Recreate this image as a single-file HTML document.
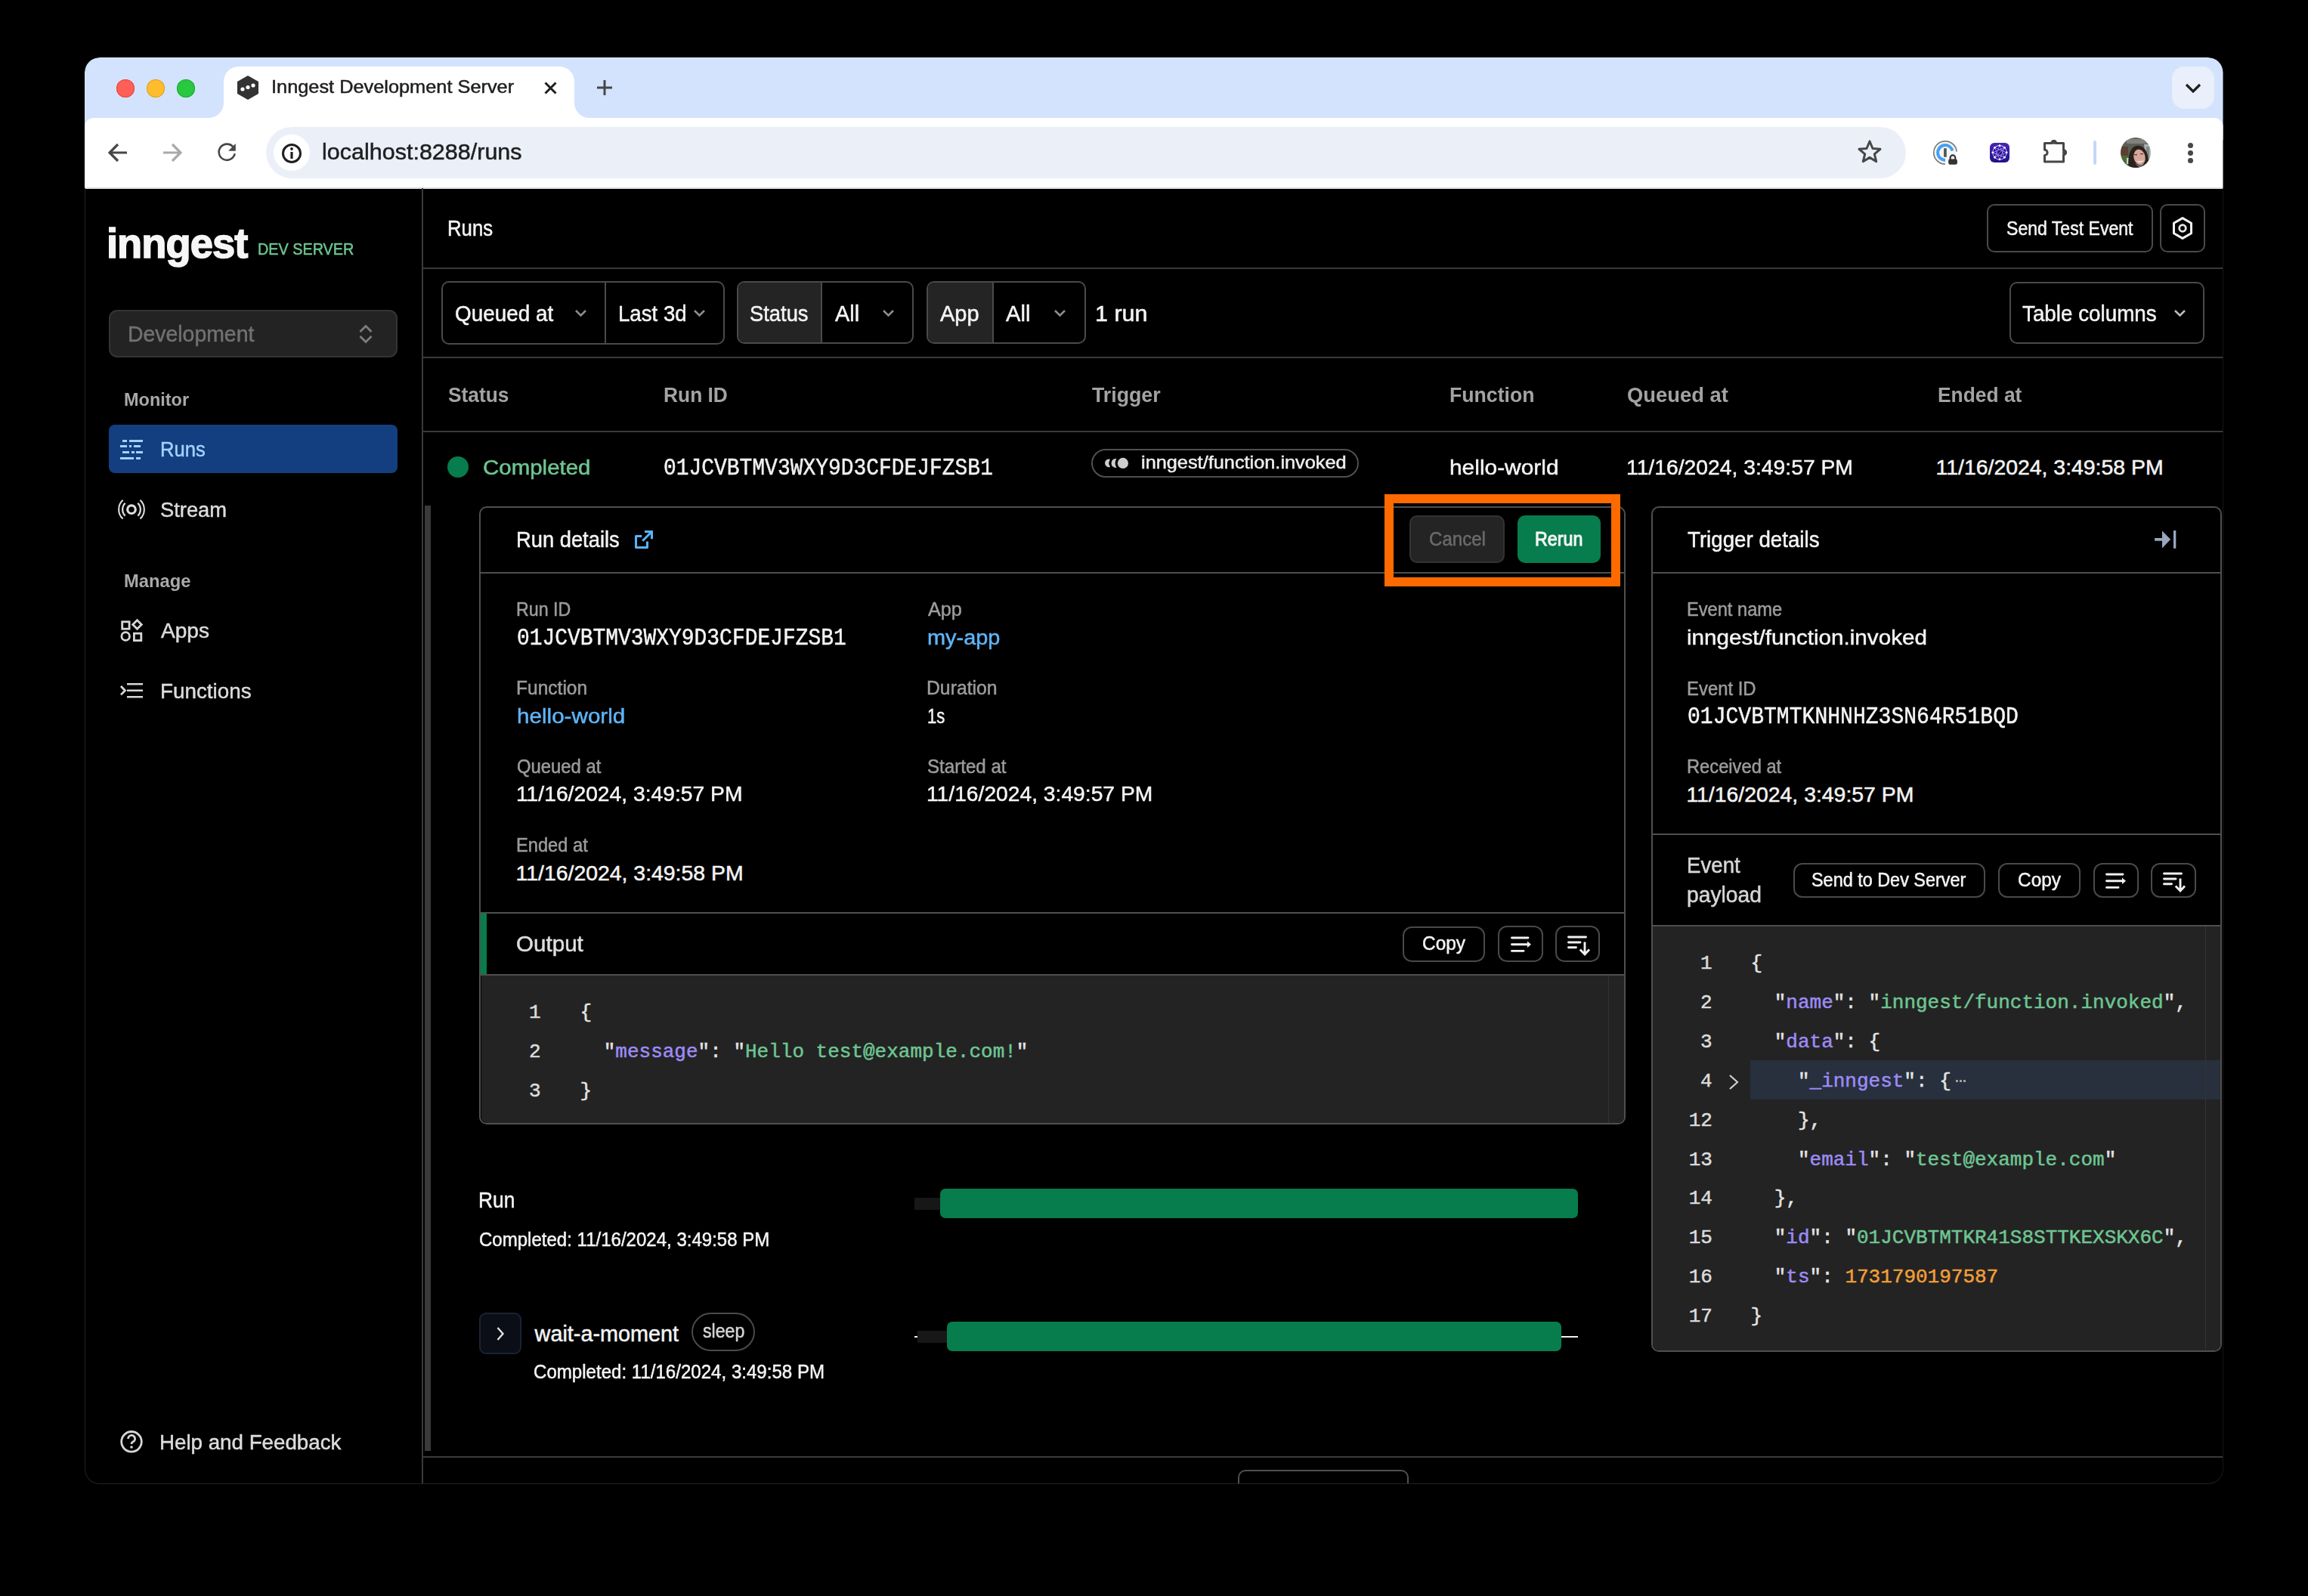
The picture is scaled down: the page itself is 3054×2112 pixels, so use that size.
<!DOCTYPE html>
<html><head><meta charset="utf-8"><style>
html,body{margin:0;padding:0;background:#000;width:3054px;height:2112px;overflow:hidden}
.t{position:absolute;white-space:nowrap;-webkit-text-stroke-width:0.5px}
#clip{position:absolute;left:0;top:0;width:3054px;height:2112px;clip-path:inset(76px 112.5px 148px 112px round 20px)}
</style></head><body><div id="clip">
<div style="position:absolute;left:112px;top:76px;width:2829.5px;height:1888px;background:#000;border-radius:20px;box-shadow:0 0 0 1px #2a2a2a;overflow:hidden"></div>
<div style="position:absolute;left:112px;top:76px;width:2829.5px;height:109px;background:#d3e3fd;border-radius:20px 20px 0 0"></div>
<div style="position:absolute;left:112px;top:156px;width:2829.5px;height:92px;background:#fff;border-radius:12px 12px 0 0"></div>
<div style="position:absolute;left:112px;top:247.5px;width:2829.5px;height:2.0px;background:#dcdcdc"></div>
<div style="position:absolute;left:296px;top:88px;width:464px;height:72px;background:#fff;border-radius:20px 20px 0 0"></div>
<svg style="position:absolute;left:276px;top:136px;" width="20" height="20" viewBox="0 0 20 20" fill="none"><path d="M20 0 V20 H0 A20 20 0 0 0 20 0Z" fill="#fff"/></svg>
<svg style="position:absolute;left:760px;top:136px;" width="20" height="20" viewBox="0 0 20 20" fill="none"><path d="M0 0 V20 H20 A20 20 0 0 1 0 0Z" fill="#fff"/></svg>
<div style="position:absolute;left:154px;top:105px;width:24px;height:24px;background:#ff5f57;border-radius:50%;box-shadow:inset 0 0 0 1px #e2463f"></div>
<div style="position:absolute;left:194px;top:105px;width:24px;height:24px;background:#febc2e;border-radius:50%;box-shadow:inset 0 0 0 1px #e1a116"></div>
<div style="position:absolute;left:234px;top:105px;width:24px;height:24px;background:#28c840;border-radius:50%;box-shadow:inset 0 0 0 1px #1aab29"></div>
<svg style="position:absolute;left:313px;top:100px;" width="30" height="32" viewBox="0 0 30 32" fill="none"><path d="M15 0 L29 8 V24 L15 32 L1 24 V8Z" fill="#333"/><circle cx="8" cy="18" r="2.6" fill="#fff"/><circle cx="15" cy="15.5" r="2.6" fill="#fff"/><circle cx="22" cy="13" r="2.6" fill="#fff"/></svg>
<div id="t1" class="t" style="left:358.9px;top:103.4px;font-size:24px;line-height:24px;color:#1f1f1f;font-weight:400;font-family:'Liberation Sans', sans-serif;transform:scaleX(1.0557);transform-origin:0 0;">Inngest Development Server</div>
<svg style="position:absolute;left:720px;top:108px;" width="17" height="17" viewBox="0 0 17 17" fill="none"><path d="M1.5 1.5 L15.5 15.5 M15.5 1.5 L1.5 15.5" stroke="#1f1f1f" stroke-width="3"/></svg>
<svg style="position:absolute;left:790px;top:106px;" width="20" height="20" viewBox="0 0 20 20" fill="none"><path d="M10 0 V20 M0 10 H20" stroke="#474747" stroke-width="3"/></svg>
<div style="position:absolute;left:2874px;top:88px;width:56px;height:56px;background:#e9effb;border-radius:16px"></div>
<svg style="position:absolute;left:2891px;top:110px;" width="22" height="13" viewBox="0 0 22 13" fill="none"><path d="M2 2 L11 11 L20 2" stroke="#1f1f1f" stroke-width="3.2" fill="none"/></svg>
<svg style="position:absolute;left:143px;top:189px;" width="27" height="26" viewBox="0 0 27 26" fill="none"><path d="M25 13 H3 M13 2 L2 13 L13 24" stroke="#474747" stroke-width="3.2" fill="none"/></svg>
<svg style="position:absolute;left:214px;top:189px;" width="27" height="26" viewBox="0 0 27 26" fill="none"><path d="M2 13 H24 M14 2 L25 13 L14 24" stroke="#a9a9a9" stroke-width="3.2" fill="none"/></svg>
<svg style="position:absolute;left:286px;top:189px;" width="28" height="28" viewBox="0 0 28 28" fill="none"><path d="M22.6 5.6 A10.6 10.6 0 1 0 24.7 14.3" stroke="#474747" stroke-width="2.6" fill="none"/><path d="M16.2 10.8 H25.8 V1Z" fill="#474747"/></svg>
<div style="position:absolute;left:352px;top:168px;width:2170px;height:68px;background:#ebf0f8;border-radius:34px"></div>
<div style="position:absolute;left:361.5px;top:178px;width:48.0px;height:48px;background:#fff;border-radius:50%"></div>
<svg style="position:absolute;left:372px;top:189px;" width="28" height="28" viewBox="0 0 28 28" fill="none"><circle cx="14" cy="14" r="11.5" stroke="#1f1f1f" stroke-width="3"/><path d="M14 12 V21" stroke="#1f1f1f" stroke-width="3.2"/><circle cx="14" cy="8" r="1.9" fill="#1f1f1f"/></svg>
<div id="t2" class="t" style="left:425.9px;top:187.0px;font-size:29px;line-height:29px;color:#1f1f1f;font-weight:400;font-family:'Liberation Sans', sans-serif;transform:scaleX(1.0520);transform-origin:0 0;">localhost:8288/runs</div>
<svg style="position:absolute;left:2457px;top:184px;" width="34" height="33" viewBox="0 0 34 33" fill="none"><path d="M17 3 L21 12.5 L31 13.3 L23.3 19.8 L25.7 29.7 L17 24.4 L8.3 29.7 L10.7 19.8 L3 13.3 L13 12.5Z" stroke="#474747" stroke-width="3" stroke-linejoin="round" fill="none"/></svg>
<svg style="position:absolute;left:2556px;top:184px;" width="38" height="38" viewBox="0 0 38 38" fill="none"><circle cx="18" cy="18" r="14.2" fill="#f5f5f5"/><path d="M18 33.2 A15.2 15.2 0 1 1 33.14 16.68" stroke="#7c7c7c" stroke-width="1.7" fill="none"/><path d="M27.56 15.44 A9.9 9.9 0 1 0 18 27.9" stroke="#42a0f6" stroke-width="4" fill="none"/><rect x="16.1" y="12.2" width="3.7" height="11.6" fill="#555"/><rect x="22.2" y="26.5" width="11.7" height="7.3" rx="2.3" fill="#333"/><path d="M24.6 27 V24.8 A3.35 3.35 0 0 1 31.3 24.8 V27" stroke="#333" stroke-width="2.2" fill="none"/></svg>
<div style="position:absolute;left:2633px;top:189px;width:26px;height:26px;background:linear-gradient(#4c22b6,#1d1486);border-radius:6px"></div>
<svg style="position:absolute;left:2633px;top:189px;" width="26" height="26" viewBox="0 0 26 26" fill="none"><circle cx="13" cy="12.8" r="9.2" fill="#23108a" stroke="#c7b0ff" stroke-width="1.1"/><path d="M13.00 3.60 L19.51 19.31 M13.00 3.60 L6.49 19.31 M19.51 6.29 L13.00 22.00 M19.51 6.29 L3.80 12.80 M22.20 12.80 L6.49 19.31 M22.20 12.80 L6.49 6.29 M19.51 19.31 L3.80 12.80 M13.00 22.00 L6.49 6.29 M19.51 6.29 L6.49 19.31 M3.80 12.80 L19.51 19.31 " stroke="#9d86f5" stroke-width="0.9" fill="none"/><circle cx="13.00" cy="3.60" r="1.35" fill="#fff"/><circle cx="19.51" cy="6.29" r="1.35" fill="#fff"/><circle cx="22.20" cy="12.80" r="1.35" fill="#fff"/><circle cx="19.51" cy="19.31" r="1.35" fill="#fff"/><circle cx="13.00" cy="22.00" r="1.35" fill="#fff"/><circle cx="6.49" cy="19.31" r="1.35" fill="#fff"/><circle cx="3.80" cy="12.80" r="1.35" fill="#fff"/><circle cx="6.49" cy="6.29" r="1.35" fill="#fff"/></svg>
<svg style="position:absolute;left:2700px;top:180px;" width="40" height="40" viewBox="0 0 40 40" fill="none"><path d="M5.5 9.5 H14.7 A3 3 0 0 1 20.7 9.5 H30.5 V18.7 A3 3 0 0 1 30.5 24.7 V34 H5.5 V25.5 A3.6 3.6 0 0 0 5.5 18.3Z" stroke="#474747" stroke-width="3" stroke-linejoin="round" fill="none"/><circle cx="17.9" cy="7.9" r="2.9" fill="#474747"/><circle cx="32" cy="21.7" r="2.9" fill="#474747"/></svg>
<div style="position:absolute;left:2770px;top:186px;width:4px;height:32px;background:#c4d7f7;border-radius:2px"></div>
<svg style="position:absolute;left:2806px;top:182px;" width="40" height="40" viewBox="0 0 40 40" fill="none"><defs><clipPath id="av"><circle cx="20" cy="20" r="20"/></clipPath><filter id="avb"><feGaussianBlur stdDeviation="0.7"/></filter></defs><g clip-path="url(#av)"><g filter="url(#avb)"><rect x="-2" y="-2" width="44" height="44" fill="#5b5e55"/><rect x="8" y="2" width="28" height="6" fill="#7f837b"/><path d="M31 9 H42 V38 H34Z" fill="#aeb3b0"/><path d="M34 12 H38 V30 H34Z" fill="#7d8a86"/><rect x="-2" y="12" width="12" height="13" fill="#5a4030"/><rect x="-2" y="24" width="13" height="16" fill="#4e6a36"/><rect x="8" y="27" width="4" height="8" fill="#c9d3d6"/><path d="M11 42 C9 30 11 16 18 12 C26 8 34 14 36 24 C37 32 38 38 40 42Z" fill="#2b211b"/><ellipse cx="25" cy="26" rx="7.6" ry="10.4" fill="#d7a69a" transform="rotate(-12 25 26)"/><path d="M19 33 Q25 41 32 32 Q30 38 25 39 Q21 38 19 33Z" fill="#7f736e"/><path d="M21 31 Q26 35.5 31.5 30 Q27 32 21 31Z" fill="#f2ece8"/><rect x="18" y="22" width="4" height="1.3" fill="#5a4238"/><rect x="26" y="21" width="4" height="1.3" fill="#5a4238"/><path d="M14 42 Q25 38 38 42Z" fill="#b9a9ab"/></g></g></svg>
<div style="position:absolute;left:2894.5px;top:188.8px;width:7.0px;height:7.0px;background:#474747;border-radius:50%"></div>
<div style="position:absolute;left:2894.5px;top:198.8px;width:7.0px;height:7.0px;background:#474747;border-radius:50%"></div>
<div style="position:absolute;left:2894.5px;top:208.8px;width:7.0px;height:7.0px;background:#474747;border-radius:50%"></div>
<div style="position:absolute;left:558px;top:249px;width:2px;height:1715px;background:#3a3a3a"></div>
<div style="position:absolute;left:560px;top:1927px;width:2381.5px;height:2px;background:#3a3a3a"></div>
<div style="position:absolute;left:1637.6px;top:1945.3px;width:226.9px;height:39.7px;border:2px solid #505050;box-sizing:border-box;border-radius:10px"></div>
<div id="t3" class="t" style="left:141.1px;top:294.2px;font-size:56px;line-height:56px;color:#f6f6f6;font-weight:700;font-family:'Liberation Sans', sans-serif;transform:scaleX(0.9701);transform-origin:0 0;letter-spacing:-1px;-webkit-text-stroke:1.6px #f6f6f6;">inngest</div>
<div id="t4" class="t" style="left:340.8px;top:318.9px;font-size:22.2px;line-height:22.2px;color:#6cc590;font-weight:400;font-family:'Liberation Sans', sans-serif;transform:scaleX(0.8926);transform-origin:0 0;">DEV SERVER</div>
<div style="position:absolute;left:144.1px;top:410.3px;width:381.6px;height:63.0px;background:#232323;border:2px solid #343434;box-sizing:border-box;border-radius:11px"></div>
<div id="t5" class="t" style="left:169.0px;top:427.5px;font-size:28.6px;line-height:28.6px;color:#717171;font-weight:400;font-family:'Liberation Sans', sans-serif;transform:scaleX(0.9932);transform-origin:0 0;">Development</div>
<svg style="position:absolute;left:472px;top:428px;" width="24" height="28" viewBox="0 0 24 28" fill="none"><path d="M4.5 11 L12 3.5 L19.5 11 M4.5 17 L12 24.5 L19.5 17" stroke="#7d7d7d" stroke-width="2.8" fill="none"/></svg>
<div id="t6" class="t" style="left:164.4px;top:517.3px;font-size:24.7px;line-height:24.7px;color:#a9a9a9;font-weight:700;font-family:'Liberation Sans', sans-serif;transform:scaleX(0.9512);transform-origin:0 0;-webkit-text-stroke-width:0;">Monitor</div>
<div style="position:absolute;left:144.1px;top:562px;width:381.6px;height:63.6px;background:#133f80;border-radius:8px"></div>
<div style="position:absolute;left:162.2px;top:582px;width:5.6px;height:3px;background:#a3d2fa"></div>
<div style="position:absolute;left:171px;top:582px;width:18.2px;height:3px;background:#a3d2fa"></div>
<div style="position:absolute;left:158.8px;top:589px;width:9.0px;height:3px;background:#a3d2fa"></div>
<div style="position:absolute;left:170.6px;top:589px;width:3.2px;height:3px;background:#a3d2fa"></div>
<div style="position:absolute;left:176.7px;top:589px;width:9.3px;height:3px;background:#a3d2fa"></div>
<div style="position:absolute;left:162.2px;top:597px;width:8.8px;height:3px;background:#a3d2fa"></div>
<div style="position:absolute;left:173.8px;top:597px;width:3.8px;height:3px;background:#a3d2fa"></div>
<div style="position:absolute;left:180.4px;top:597px;width:8.8px;height:3px;background:#a3d2fa"></div>
<div style="position:absolute;left:158.8px;top:604.5px;width:17.9px;height:3.0px;background:#a3d2fa"></div>
<div style="position:absolute;left:180.4px;top:604.5px;width:5.6px;height:3.0px;background:#a3d2fa"></div>
<div id="t7" class="t" style="left:211.5px;top:579.6px;font-size:28.4px;line-height:28.4px;color:#a3d2fa;font-weight:400;font-family:'Liberation Sans', sans-serif;transform:scaleX(0.9004);transform-origin:0 0;">Runs</div>
<svg style="position:absolute;left:154px;top:659px;" width="40" height="30" viewBox="0 0 40 30" fill="none"><circle cx="20" cy="15.2" r="5.3" stroke="#dcdcdc" stroke-width="3.2"/><path d="M11.64 6.8 A11.85 11.85 0 0 0 11.64 23.6 M28.36 6.8 A11.85 11.85 0 0 1 28.36 23.6" stroke="#dcdcdc" stroke-width="2.3" fill="none"/><path d="M8.6 2.8 A16.85 16.85 0 0 0 8.6 27.6 M31.4 2.8 A16.85 16.85 0 0 1 31.4 27.6" stroke="#dcdcdc" stroke-width="2.1" fill="none"/></svg>
<div id="t8" class="t" style="left:212.3px;top:659.8px;font-size:28.4px;line-height:28.4px;color:#dcdcdc;font-weight:400;font-family:'Liberation Sans', sans-serif;transform:scaleX(0.9622);transform-origin:0 0;">Stream</div>
<div id="t9" class="t" style="left:164.2px;top:757.4px;font-size:24.7px;line-height:24.7px;color:#a9a9a9;font-weight:700;font-family:'Liberation Sans', sans-serif;transform:scaleX(0.9625);transform-origin:0 0;-webkit-text-stroke-width:0;">Manage</div>
<svg style="position:absolute;left:156px;top:817px;" width="36" height="36" viewBox="0 0 36 36" fill="none"><rect x="5.7" y="5.8" width="9.4" height="9.4" stroke="#d6d6d6" stroke-width="2.8"/><path d="M25.5 3.8 L31.3 9.5 L25.5 15.3 L19.7 9.5Z" stroke="#d6d6d6" stroke-width="2.8" fill="none"/><circle cx="10.2" cy="25" r="5.3" stroke="#d6d6d6" stroke-width="2.8"/><rect x="21.4" y="21.2" width="9.4" height="9.4" stroke="#d6d6d6" stroke-width="2.8"/></svg>
<div id="t10" class="t" style="left:212.5px;top:820.2px;font-size:28.4px;line-height:28.4px;color:#dcdcdc;font-weight:400;font-family:'Liberation Sans', sans-serif;transform:scaleX(0.9889);transform-origin:0 0;">Apps</div>
<svg style="position:absolute;left:156px;top:900px;" width="36" height="28" viewBox="0 0 36 28" fill="none"><path d="M4 8 L9.5 13.7 L4 19.4" stroke="#d6d6d6" stroke-width="2.8" fill="none"/><path d="M12 5.3 H33 M12 13.8 H33 M12 22.2 H33" stroke="#d6d6d6" stroke-width="2.6"/></svg>
<div id="t11" class="t" style="left:211.7px;top:899.7px;font-size:28.4px;line-height:28.4px;color:#dcdcdc;font-weight:400;font-family:'Liberation Sans', sans-serif;transform:scaleX(0.9802);transform-origin:0 0;">Functions</div>
<svg style="position:absolute;left:156px;top:1890px;" width="36" height="36" viewBox="0 0 36 36" fill="none"><circle cx="18" cy="17.8" r="13.3" stroke="#d6d6d6" stroke-width="2.8"/><path d="M13.6 14 A4.5 4.5 0 1 1 19.5 18.2 C18.3 18.8 18 19.5 18 21" stroke="#d6d6d6" stroke-width="2.8" fill="none"/><circle cx="18" cy="25" r="1.8" fill="#d6d6d6"/></svg>
<div id="t12" class="t" style="left:211.0px;top:1893.8px;font-size:28.4px;line-height:28.4px;color:#dcdcdc;font-weight:400;font-family:'Liberation Sans', sans-serif;transform:scaleX(0.9763);transform-origin:0 0;">Help and Feedback</div>
<div id="t13" class="t" style="left:592.2px;top:286.8px;font-size:29.8px;line-height:29.8px;color:#f4f4f4;font-weight:400;font-family:'Liberation Sans', sans-serif;transform:scaleX(0.8641);transform-origin:0 0;">Runs</div>
<div style="position:absolute;left:2629px;top:270px;width:220px;height:64px;border:2px solid #4a4a4a;box-sizing:border-box;border-radius:10px"></div>
<div id="t14" class="t" style="left:2654.9px;top:289.8px;font-size:25px;line-height:25px;color:#f4f4f4;font-weight:400;font-family:'Liberation Sans', sans-serif;transform:scaleX(0.9221);transform-origin:0 0;">Send Test Event</div>
<div style="position:absolute;left:2858px;top:270px;width:60px;height:64px;border:2px solid #4a4a4a;box-sizing:border-box;border-radius:10px"></div>
<svg style="position:absolute;left:2872px;top:286px;" width="32" height="32" viewBox="0 0 32 32" fill="none"><path d="M16 2.6 L27.5 9.3 V22.7 L16 29.4 L4.5 22.7 V9.3Z" stroke="#f0f0f0" stroke-width="3" stroke-linejoin="round" fill="none"/><circle cx="16" cy="16" r="4.3" stroke="#e6e6e6" stroke-width="2.8"/></svg>
<div style="position:absolute;left:560px;top:354px;width:2381.5px;height:2px;background:#3a3a3a"></div>
<div style="position:absolute;left:584.4px;top:372.1px;width:374.3px;height:83.6px;border:2px solid #4a4a4a;box-sizing:border-box;border-radius:10px"></div>
<div style="position:absolute;left:800px;top:373px;width:2.2px;height:82px;background:#4a4a4a"></div>
<div id="t15" class="t" style="left:601.9px;top:399.7px;font-size:29.3px;line-height:29.3px;color:#f4f4f4;font-weight:400;font-family:'Liberation Sans', sans-serif;transform:scaleX(0.9514);transform-origin:0 0;">Queued at</div>
<svg style="position:absolute;left:759.8px;top:409px;" width="17" height="11" viewBox="0 0 17 11" fill="none"><path d="M2 2 L8.5 8.5 L15 2" stroke="#8d8d8d" stroke-width="2.6" fill="none"/></svg>
<div id="t16" class="t" style="left:817.7px;top:399.7px;font-size:29.3px;line-height:29.3px;color:#f4f4f4;font-weight:400;font-family:'Liberation Sans', sans-serif;transform:scaleX(0.9428);transform-origin:0 0;">Last 3d</div>
<svg style="position:absolute;left:916.6px;top:409px;" width="17" height="11" viewBox="0 0 17 11" fill="none"><path d="M2 2 L8.5 8.5 L15 2" stroke="#8d8d8d" stroke-width="2.6" fill="none"/></svg>
<div style="position:absolute;left:975.3px;top:372.4px;width:234.1px;height:82.9px;border:2px solid #4a4a4a;box-sizing:border-box;border-radius:10px;overflow:hidden"><div style="position:absolute;left:0;top:0;width:111px;height:100%;background:#242424"></div></div>
<div style="position:absolute;left:1085.8px;top:373px;width:2.4px;height:82px;background:#4a4a4a"></div>
<div id="t17" class="t" style="left:992.4px;top:399.7px;font-size:29.3px;line-height:29.3px;color:#f4f4f4;font-weight:400;font-family:'Liberation Sans', sans-serif;transform:scaleX(0.9336);transform-origin:0 0;">Status</div>
<div id="t18" class="t" style="left:1104.7px;top:399.7px;font-size:29.3px;line-height:29.3px;color:#f4f4f4;font-weight:400;font-family:'Liberation Sans', sans-serif;transform:scaleX(0.9855);transform-origin:0 0;">All</div>
<svg style="position:absolute;left:1167.3px;top:409px;" width="17" height="11" viewBox="0 0 17 11" fill="none"><path d="M2 2 L8.5 8.5 L15 2" stroke="#8d8d8d" stroke-width="2.6" fill="none"/></svg>
<div style="position:absolute;left:1226.3px;top:372.4px;width:210.3px;height:82.9px;border:2px solid #4a4a4a;box-sizing:border-box;border-radius:10px;overflow:hidden"><div style="position:absolute;left:0;top:0;width:87px;height:100%;background:#242424"></div></div>
<div style="position:absolute;left:1312.8px;top:373px;width:2.6px;height:82px;background:#4a4a4a"></div>
<div id="t19" class="t" style="left:1244.4px;top:399.7px;font-size:29.3px;line-height:29.3px;color:#f4f4f4;font-weight:400;font-family:'Liberation Sans', sans-serif;transform:scaleX(0.9897);transform-origin:0 0;">App</div>
<div id="t20" class="t" style="left:1331.3px;top:399.7px;font-size:29.3px;line-height:29.3px;color:#f4f4f4;font-weight:400;font-family:'Liberation Sans', sans-serif;transform:scaleX(0.9952);transform-origin:0 0;">All</div>
<svg style="position:absolute;left:1394.4px;top:409px;" width="17" height="11" viewBox="0 0 17 11" fill="none"><path d="M2 2 L8.5 8.5 L15 2" stroke="#8d8d8d" stroke-width="2.6" fill="none"/></svg>
<div id="t21" class="t" style="left:1449.1px;top:399.7px;font-size:29.3px;line-height:29.3px;color:#f4f4f4;font-weight:400;font-family:'Liberation Sans', sans-serif;transform:scaleX(1.0397);transform-origin:0 0;">1 run</div>
<div style="position:absolute;left:2658.5px;top:372.5px;width:258.5px;height:82.5px;border:2px solid #4a4a4a;box-sizing:border-box;border-radius:10px"></div>
<div id="t22" class="t" style="left:2676.0px;top:399.7px;font-size:29.3px;line-height:29.3px;color:#f4f4f4;font-weight:400;font-family:'Liberation Sans', sans-serif;transform:scaleX(0.9485);transform-origin:0 0;">Table columns</div>
<svg style="position:absolute;left:2876px;top:409px;" width="17" height="11" viewBox="0 0 17 11" fill="none"><path d="M2 2 L8.5 8.5 L15 2" stroke="#bbbbbb" stroke-width="2.6" fill="none"/></svg>
<div style="position:absolute;left:560px;top:472px;width:2381.5px;height:2px;background:#3a3a3a"></div>
<div id="t23" class="t" style="left:592.5px;top:508.3px;font-size:28.4px;line-height:28.4px;color:#a3a3a3;font-weight:700;font-family:'Liberation Sans', sans-serif;transform:scaleX(0.9270);transform-origin:0 0;-webkit-text-stroke-width:0;">Status</div>
<div id="t24" class="t" style="left:878.1px;top:508.3px;font-size:28.4px;line-height:28.4px;color:#a3a3a3;font-weight:700;font-family:'Liberation Sans', sans-serif;transform:scaleX(0.9282);transform-origin:0 0;-webkit-text-stroke-width:0;">Run ID</div>
<div id="t25" class="t" style="left:1444.7px;top:508.3px;font-size:28.4px;line-height:28.4px;color:#a3a3a3;font-weight:700;font-family:'Liberation Sans', sans-serif;transform:scaleX(0.9419);transform-origin:0 0;-webkit-text-stroke-width:0;">Trigger</div>
<div id="t26" class="t" style="left:1918.0px;top:508.3px;font-size:28.4px;line-height:28.4px;color:#a3a3a3;font-weight:700;font-family:'Liberation Sans', sans-serif;transform:scaleX(0.9387);transform-origin:0 0;-webkit-text-stroke-width:0;">Function</div>
<div id="t27" class="t" style="left:2152.9px;top:508.3px;font-size:28.4px;line-height:28.4px;color:#a3a3a3;font-weight:700;font-family:'Liberation Sans', sans-serif;transform:scaleX(0.9641);transform-origin:0 0;-webkit-text-stroke-width:0;">Queued at</div>
<div id="t28" class="t" style="left:2563.7px;top:508.3px;font-size:28.4px;line-height:28.4px;color:#a3a3a3;font-weight:700;font-family:'Liberation Sans', sans-serif;transform:scaleX(0.9286);transform-origin:0 0;-webkit-text-stroke-width:0;">Ended at</div>
<div style="position:absolute;left:560px;top:570px;width:2381.5px;height:2px;background:#3a3a3a"></div>
<div style="position:absolute;left:592px;top:604px;width:28px;height:28px;background:#077c4c;border-radius:50%"></div>
<div id="t29" class="t" style="left:639.0px;top:603.8px;font-size:28.4px;line-height:28.4px;color:#6ec592;font-weight:400;font-family:'Liberation Sans', sans-serif;transform:scaleX(1.0379);transform-origin:0 0;">Completed</div>
<div id="t30" class="t" style="left:877.5px;top:603.7px;font-size:31.5px;line-height:31.5px;color:#f0f0f0;font-weight:400;font-family:'Liberation Mono', monospace;transform:scaleX(0.8869);transform-origin:0 0;">01JCVBTMV3WXY9D3CFDEJFZSB1</div>
<div style="position:absolute;left:1444.3px;top:593.7px;width:353.7px;height:38.6px;border:2px solid #505050;box-sizing:border-box;border-radius:20px"></div>
<svg style="position:absolute;left:1458px;top:603px;" width="40" height="20" viewBox="0 0 40 20" fill="none"><path d="M11.09 4.91 A5.3 5.3 0 1 0 11.09 14.89 A8.2 8.2 0 0 1 11.09 4.91Z" fill="#cdcdcd"/><path d="M19.42 4.01 A5.97 5.97 0 1 0 19.42 15.79 A11.08 11.08 0 0 1 19.42 4.01Z" fill="#cdcdcd"/><circle cx="27.9" cy="9.9" r="7.1" fill="#cdcdcd"/></svg>
<div id="t31" class="t" style="left:1509.6px;top:600.3px;font-size:24.5px;line-height:24.5px;color:#eeeeee;font-weight:400;font-family:'Liberation Sans', sans-serif;transform:scaleX(1.0335);transform-origin:0 0;">inngest/function.invoked</div>
<div id="t32" class="t" style="left:1917.8px;top:603.6px;font-size:28.4px;line-height:28.4px;color:#f4f4f4;font-weight:400;font-family:'Liberation Sans', sans-serif;transform:scaleX(1.0529);transform-origin:0 0;">hello-world</div>
<div id="t33" class="t" style="left:2151.9px;top:604.0px;font-size:28.4px;line-height:28.4px;color:#f4f4f4;font-weight:400;font-family:'Liberation Sans', sans-serif;transform:scaleX(0.9966);transform-origin:0 0;">11/16/2024, 3:49:57 PM</div>
<div id="t34" class="t" style="left:2561.6px;top:604.0px;font-size:28.4px;line-height:28.4px;color:#f4f4f4;font-weight:400;font-family:'Liberation Sans', sans-serif;">11/16/2024, 3:49:58 PM</div>
<div style="position:absolute;left:562px;top:668.5px;width:8px;height:1251.5px;background:#3a3a3a"></div>
<div style="position:absolute;left:633.8px;top:669.7px;width:1517.0px;height:818.5px;border:2px solid #4f4f4f;box-sizing:border-box;border-radius:10px"></div>
<div id="t35" class="t" style="left:682.7px;top:699.6px;font-size:28.8px;line-height:28.8px;color:#f4f4f4;font-weight:400;font-family:'Liberation Sans', sans-serif;transform:scaleX(0.9487);transform-origin:0 0;">Run details</div>
<svg style="position:absolute;left:836px;top:698px;" width="32" height="32" viewBox="0 0 32 32" fill="none"><path d="M13.3 11.6 H5.5 V26.4 H20.5 V18.6" stroke="#5ab3f8" stroke-width="3" fill="none" stroke-linejoin="round"/><path d="M17 5.6 H26.5 V15.2 M26 6 L14.2 17.8" stroke="#5ab3f8" stroke-width="3" fill="none"/></svg>
<div style="position:absolute;left:635px;top:757px;width:1514px;height:2px;background:#4f4f4f"></div>
<div style="position:absolute;left:1865.4px;top:682px;width:126.0px;height:63.3px;background:#242424;border:2px solid #333;box-sizing:border-box;border-radius:10px"></div>
<div id="t36" class="t" style="left:1890.7px;top:701.1px;font-size:25.5px;line-height:25.5px;color:#6b6b6b;font-weight:400;font-family:'Liberation Sans', sans-serif;transform:scaleX(0.9438);transform-origin:0 0;">Cancel</div>
<div style="position:absolute;left:2008px;top:682px;width:109.7px;height:63.3px;background:#077c4c;border-radius:10px"></div>
<div id="t37" class="t" style="left:2030.5px;top:701.1px;font-size:25.5px;line-height:25.5px;color:#f6f6f6;font-weight:400;font-family:'Liberation Sans', sans-serif;transform:scaleX(0.9129);transform-origin:0 0;-webkit-text-stroke-width:1px;">Rerun</div>
<div id="t38" class="t" style="left:682.8px;top:794.1px;font-size:25.2px;line-height:25.2px;color:#9c9c9c;font-weight:400;font-family:'Liberation Sans', sans-serif;transform:scaleX(0.9229);transform-origin:0 0;">Run ID</div>
<div id="t39" class="t" style="left:683.7px;top:828.9px;font-size:31.5px;line-height:31.5px;color:#f4f4f4;font-weight:400;font-family:'Liberation Mono', monospace;transform:scaleX(0.8865);transform-origin:0 0;">01JCVBTMV3WXY9D3CFDEJFZSB1</div>
<div id="t40" class="t" style="left:1228.4px;top:794.1px;font-size:25.2px;line-height:25.2px;color:#9c9c9c;font-weight:400;font-family:'Liberation Sans', sans-serif;transform:scaleX(1.0021);transform-origin:0 0;">App</div>
<div id="t41" class="t" style="left:1227.4px;top:829.0px;font-size:28.4px;line-height:28.4px;color:#5fb4f6;font-weight:400;font-family:'Liberation Sans', sans-serif;transform:scaleX(1.0185);transform-origin:0 0;">my-app</div>
<div id="t42" class="t" style="left:682.7px;top:898.3px;font-size:25.2px;line-height:25.2px;color:#9c9c9c;font-weight:400;font-family:'Liberation Sans', sans-serif;transform:scaleX(0.9744);transform-origin:0 0;">Function</div>
<div id="t43" class="t" style="left:683.6px;top:932.8px;font-size:28.4px;line-height:28.4px;color:#5fb4f6;font-weight:400;font-family:'Liberation Sans', sans-serif;transform:scaleX(1.0439);transform-origin:0 0;">hello-world</div>
<div id="t44" class="t" style="left:1226.4px;top:898.3px;font-size:25.2px;line-height:25.2px;color:#9c9c9c;font-weight:400;font-family:'Liberation Sans', sans-serif;transform:scaleX(0.9827);transform-origin:0 0;">Duration</div>
<div id="t45" class="t" style="left:1226.8px;top:932.8px;font-size:28.4px;line-height:28.4px;color:#f4f4f4;font-weight:400;font-family:'Liberation Sans', sans-serif;transform:scaleX(0.7773);transform-origin:0 0;">1s</div>
<div id="t46" class="t" style="left:683.7px;top:1002.2px;font-size:25.2px;line-height:25.2px;color:#9c9c9c;font-weight:400;font-family:'Liberation Sans', sans-serif;transform:scaleX(0.9465);transform-origin:0 0;">Queued at</div>
<div id="t47" class="t" style="left:682.6px;top:1036.0px;font-size:28.4px;line-height:28.4px;color:#f4f4f4;font-weight:400;font-family:'Liberation Sans', sans-serif;transform:scaleX(0.9949);transform-origin:0 0;">11/16/2024, 3:49:57 PM</div>
<div id="t48" class="t" style="left:1227.4px;top:1002.2px;font-size:25.2px;line-height:25.2px;color:#9c9c9c;font-weight:400;font-family:'Liberation Sans', sans-serif;transform:scaleX(0.9574);transform-origin:0 0;">Started at</div>
<div id="t49" class="t" style="left:1226.4px;top:1036.0px;font-size:28.4px;line-height:28.4px;color:#f4f4f4;font-weight:400;font-family:'Liberation Sans', sans-serif;transform:scaleX(0.9943);transform-origin:0 0;">11/16/2024, 3:49:57 PM</div>
<div id="t50" class="t" style="left:682.7px;top:1106.4px;font-size:25.2px;line-height:25.2px;color:#9c9c9c;font-weight:400;font-family:'Liberation Sans', sans-serif;transform:scaleX(0.9399);transform-origin:0 0;">Ended at</div>
<div id="t51" class="t" style="left:682.6px;top:1140.6px;font-size:28.4px;line-height:28.4px;color:#f4f4f4;font-weight:400;font-family:'Liberation Sans', sans-serif;">11/16/2024, 3:49:58 PM</div>
<div style="position:absolute;left:636px;top:1206.7px;width:1513px;height:2.0px;background:#4f4f4f"></div>
<div style="position:absolute;left:635.6px;top:1208.7px;width:8.0px;height:80.3px;background:#077c4c"></div>
<div id="t52" class="t" style="left:683.0px;top:1235.3px;font-size:28.8px;line-height:28.8px;color:#dedede;font-weight:400;font-family:'Liberation Sans', sans-serif;transform:scaleX(1.0275);transform-origin:0 0;">Output</div>
<div style="position:absolute;left:1856.4px;top:1225.5px;width:109.0px;height:47.0px;border:2px solid #494949;box-sizing:border-box;border-radius:12px"></div>
<div id="t53" class="t" style="left:1881.6px;top:1235.6px;font-size:25.2px;line-height:25.2px;color:#f4f4f4;font-weight:400;font-family:'Liberation Sans', sans-serif;transform:scaleX(0.9690);transform-origin:0 0;">Copy</div>
<div style="position:absolute;left:1982.1px;top:1225.2px;width:59.8px;height:47.6px;border:2px solid #494949;box-sizing:border-box;border-radius:12px"></div>
<svg style="position:absolute;left:1998.5px;top:1237.5px;" width="30" height="24" viewBox="0 0 30 24" fill="none"><path d="M1.5 3 H23 M1.5 20.4 H17" stroke="#f0f0f0" stroke-width="2.9" stroke-linecap="round"/><path d="M1.5 11.7 H22" stroke="#f0f0f0" stroke-width="2.9" stroke-linecap="round"/><path d="M22 7.5 L27 11.7 L22 16Z" fill="#f0f0f0"/></svg>
<div style="position:absolute;left:2058.2px;top:1225.2px;width:59.2px;height:47.6px;border:2px solid #494949;box-sizing:border-box;border-radius:12px"></div>
<svg style="position:absolute;left:2074.3px;top:1237.5px;" width="32" height="28" viewBox="0 0 32 28" fill="none"><path d="M1.5 2 H24.5 M1.5 9 H17 M1.5 15.7 H11.5" stroke="#f0f0f0" stroke-width="2.9" stroke-linecap="round"/><path d="M23 8.5 V25 M16.8 18.5 L23 25 L29 18.5" stroke="#f0f0f0" stroke-width="2.9" fill="none"/></svg>
<div style="position:absolute;left:636px;top:1288.5px;width:1513px;height:2.0px;background:#4f4f4f"></div>
<div style="position:absolute;left:636.7px;top:1290.5px;width:1511.9px;height:195.1px;background:#232323;border-radius:0 0 8px 8px"></div>
<div style="position:absolute;left:2127.5px;top:1290.5px;width:1.5px;height:195.1px;background:#333"></div>
<div id="t54" class="t" style="left:700.1px;top:1326.5px;font-size:26px;line-height:26px;color:#dcdcdc;font-weight:400;font-family:'Liberation Mono', monospace;">1</div>
<div class="t" style="left:767.5px;top:1326.5px;font-size:26px;line-height:26px;font-family:'Liberation Mono', monospace;white-space:pre"><span style="color:#e4e4e4">{</span></div>
<div id="t56" class="t" style="left:700.1px;top:1378.5px;font-size:26px;line-height:26px;color:#dcdcdc;font-weight:400;font-family:'Liberation Mono', monospace;">2</div>
<div class="t" style="left:767.5px;top:1378.5px;font-size:26px;line-height:26px;font-family:'Liberation Mono', monospace;white-space:pre"><span style="color:#e4e4e4">  </span><span style="color:#e4e4e4">"</span><span style="color:#9d8bf5">message</span><span style="color:#e4e4e4">"</span><span style="color:#e4e4e4">: </span><span style="color:#e4e4e4">"</span><span style="color:#6ec592">Hello test@example.com!</span><span style="color:#e4e4e4">"</span></div>
<div id="t58" class="t" style="left:700.1px;top:1430.5px;font-size:26px;line-height:26px;color:#dcdcdc;font-weight:400;font-family:'Liberation Mono', monospace;">3</div>
<div class="t" style="left:767.5px;top:1430.5px;font-size:26px;line-height:26px;font-family:'Liberation Mono', monospace;white-space:pre"><span style="color:#e4e4e4">}</span></div>
<div style="position:absolute;left:2184.5px;top:670px;width:755.5px;height:1119px;border:2px solid #4f4f4f;box-sizing:border-box;border-radius:10px"></div>
<div id="t60" class="t" style="left:2233.4px;top:700.2px;font-size:28.8px;line-height:28.8px;color:#f4f4f4;font-weight:400;font-family:'Liberation Sans', sans-serif;transform:scaleX(0.9619);transform-origin:0 0;">Trigger details</div>
<svg style="position:absolute;left:2850px;top:701px;" width="31" height="26" viewBox="0 0 31 26" fill="none"><path d="M1.1 11.1 H11 V14.8 H1.1Z" fill="#98a6bf"/><path d="M11 1.4 L22.1 12.8 L11 24.4Z" fill="#98a6bf"/><rect x="26" y="1" width="3.3" height="23.7" fill="#98a6bf"/></svg>
<div style="position:absolute;left:2186.5px;top:757px;width:751.5px;height:2px;background:#4f4f4f"></div>
<div id="t61" class="t" style="left:2231.5px;top:794.2px;font-size:25.2px;line-height:25.2px;color:#9c9c9c;font-weight:400;font-family:'Liberation Sans', sans-serif;transform:scaleX(0.9383);transform-origin:0 0;">Event name</div>
<div id="t62" class="t" style="left:2232.4px;top:829.0px;font-size:28.4px;line-height:28.4px;color:#f4f4f4;font-weight:400;font-family:'Liberation Sans', sans-serif;transform:scaleX(1.0436);transform-origin:0 0;">inngest/function.invoked</div>
<div id="t63" class="t" style="left:2231.5px;top:898.7px;font-size:25.2px;line-height:25.2px;color:#9c9c9c;font-weight:400;font-family:'Liberation Sans', sans-serif;transform:scaleX(0.9486);transform-origin:0 0;">Event ID</div>
<div id="t64" class="t" style="left:2232.5px;top:932.9px;font-size:31.5px;line-height:31.5px;color:#f4f4f4;font-weight:400;font-family:'Liberation Mono', monospace;transform:scaleX(0.8908);transform-origin:0 0;">01JCVBTMTKNHNHZ3SN64R51BQD</div>
<div id="t65" class="t" style="left:2231.5px;top:1002.1px;font-size:25.2px;line-height:25.2px;color:#9c9c9c;font-weight:400;font-family:'Liberation Sans', sans-serif;transform:scaleX(0.9411);transform-origin:0 0;">Received at</div>
<div id="t66" class="t" style="left:2231.4px;top:1037.0px;font-size:28.4px;line-height:28.4px;color:#f4f4f4;font-weight:400;font-family:'Liberation Sans', sans-serif;">11/16/2024, 3:49:57 PM</div>
<div style="position:absolute;left:2186.5px;top:1102.5px;width:751.5px;height:2.0px;background:#4f4f4f"></div>
<div id="t67" class="t" style="left:2231.5px;top:1130.6px;font-size:28.8px;line-height:28.8px;color:#d6d6d6;font-weight:400;font-family:'Liberation Sans', sans-serif;transform:scaleX(0.9604);transform-origin:0 0;">Event</div>
<div id="t68" class="t" style="left:2232.4px;top:1170.0px;font-size:28.8px;line-height:28.8px;color:#d6d6d6;font-weight:400;font-family:'Liberation Sans', sans-serif;transform:scaleX(0.9812);transform-origin:0 0;">payload</div>
<div style="position:absolute;left:2372.5px;top:1141.8px;width:254.9px;height:46.2px;border:2px solid #494949;box-sizing:border-box;border-radius:12px"></div>
<div id="t69" class="t" style="left:2397.1px;top:1152.4px;font-size:25.2px;line-height:25.2px;color:#f4f4f4;font-weight:400;font-family:'Liberation Sans', sans-serif;transform:scaleX(0.9294);transform-origin:0 0;">Send to Dev Server</div>
<div style="position:absolute;left:2644px;top:1141.8px;width:109.3px;height:46.2px;border:2px solid #494949;box-sizing:border-box;border-radius:12px"></div>
<div id="t70" class="t" style="left:2669.6px;top:1152.4px;font-size:25.2px;line-height:25.2px;color:#f4f4f4;font-weight:400;font-family:'Liberation Sans', sans-serif;transform:scaleX(0.9690);transform-origin:0 0;">Copy</div>
<div style="position:absolute;left:2770px;top:1141.8px;width:59.6px;height:46.2px;border:2px solid #494949;box-sizing:border-box;border-radius:12px"></div>
<svg style="position:absolute;left:2786.4px;top:1153.5px;" width="30" height="24" viewBox="0 0 30 24" fill="none"><path d="M1.5 3 H23 M1.5 20.4 H17" stroke="#f0f0f0" stroke-width="2.9" stroke-linecap="round"/><path d="M1.5 11.7 H22" stroke="#f0f0f0" stroke-width="2.9" stroke-linecap="round"/><path d="M22 7.5 L27 11.7 L22 16Z" fill="#f0f0f0"/></svg>
<div style="position:absolute;left:2846px;top:1141.8px;width:59.5px;height:46.2px;border:2px solid #494949;box-sizing:border-box;border-radius:12px"></div>
<svg style="position:absolute;left:2862.2px;top:1153.5px;" width="32" height="28" viewBox="0 0 32 28" fill="none"><path d="M1.5 2 H24.5 M1.5 9 H17 M1.5 15.7 H11.5" stroke="#f0f0f0" stroke-width="2.9" stroke-linecap="round"/><path d="M23 8.5 V25 M16.8 18.5 L23 25 L29 18.5" stroke="#f0f0f0" stroke-width="2.9" fill="none"/></svg>
<div style="position:absolute;left:2186.5px;top:1224.2px;width:751.5px;height:2.0px;background:#4f4f4f"></div>
<div style="position:absolute;left:2186.5px;top:1226.2px;width:751.5px;height:560.8px;background:#232323;border-radius:0 0 8px 8px"></div>
<div style="position:absolute;left:2316px;top:1403px;width:622px;height:51.5px;background:#27303c"></div>
<div style="position:absolute;left:2917.8px;top:1226.2px;width:1.5px;height:560.8px;background:#333"></div>
<div id="t71" class="t" style="left:2250.1px;top:1262.1px;font-size:26px;line-height:26px;color:#dcdcdc;font-weight:400;font-family:'Liberation Mono', monospace;">1</div>
<div class="t" style="left:2316.5px;top:1262.1px;font-size:26px;line-height:26px;font-family:'Liberation Mono', monospace;white-space:pre"><span style="color:#e4e4e4">{</span></div>
<div id="t73" class="t" style="left:2250.1px;top:1313.9px;font-size:26px;line-height:26px;color:#dcdcdc;font-weight:400;font-family:'Liberation Mono', monospace;">2</div>
<div class="t" style="left:2316.5px;top:1313.9px;font-size:26px;line-height:26px;font-family:'Liberation Mono', monospace;white-space:pre"><span style="color:#e4e4e4">  </span><span style="color:#e4e4e4">"</span><span style="color:#9d8bf5">name</span><span style="color:#e4e4e4">"</span><span style="color:#e4e4e4">: </span><span style="color:#e4e4e4">"</span><span style="color:#6ec592">inngest/function.invoked</span><span style="color:#e4e4e4">"</span><span style="color:#e4e4e4">,</span></div>
<div id="t75" class="t" style="left:2250.1px;top:1365.8px;font-size:26px;line-height:26px;color:#dcdcdc;font-weight:400;font-family:'Liberation Mono', monospace;">3</div>
<div class="t" style="left:2316.5px;top:1365.8px;font-size:26px;line-height:26px;font-family:'Liberation Mono', monospace;white-space:pre"><span style="color:#e4e4e4">  </span><span style="color:#e4e4e4">"</span><span style="color:#9d8bf5">data</span><span style="color:#e4e4e4">"</span><span style="color:#e4e4e4">: {</span></div>
<div id="t77" class="t" style="left:2250.1px;top:1417.7px;font-size:26px;line-height:26px;color:#dcdcdc;font-weight:400;font-family:'Liberation Mono', monospace;">4</div>
<div class="t" style="left:2316.5px;top:1417.7px;font-size:26px;line-height:26px;font-family:'Liberation Mono', monospace;white-space:pre"><span style="color:#e4e4e4">    </span><span style="color:#e4e4e4">"</span><span style="color:#9d8bf5">_inngest</span><span style="color:#e4e4e4">"</span><span style="color:#e4e4e4">: {</span></div>
<div id="t79" class="t" style="left:2234.7px;top:1469.6px;font-size:26px;line-height:26px;color:#dcdcdc;font-weight:400;font-family:'Liberation Mono', monospace;">12</div>
<div class="t" style="left:2316.5px;top:1469.6px;font-size:26px;line-height:26px;font-family:'Liberation Mono', monospace;white-space:pre"><span style="color:#e4e4e4">    },</span></div>
<div id="t81" class="t" style="left:2234.7px;top:1521.5px;font-size:26px;line-height:26px;color:#dcdcdc;font-weight:400;font-family:'Liberation Mono', monospace;">13</div>
<div class="t" style="left:2316.5px;top:1521.5px;font-size:26px;line-height:26px;font-family:'Liberation Mono', monospace;white-space:pre"><span style="color:#e4e4e4">    </span><span style="color:#e4e4e4">"</span><span style="color:#9d8bf5">email</span><span style="color:#e4e4e4">"</span><span style="color:#e4e4e4">: </span><span style="color:#e4e4e4">"</span><span style="color:#6ec592">test@example.com</span><span style="color:#e4e4e4">"</span></div>
<div id="t83" class="t" style="left:2234.7px;top:1573.4px;font-size:26px;line-height:26px;color:#dcdcdc;font-weight:400;font-family:'Liberation Mono', monospace;">14</div>
<div class="t" style="left:2316.5px;top:1573.4px;font-size:26px;line-height:26px;font-family:'Liberation Mono', monospace;white-space:pre"><span style="color:#e4e4e4">  },</span></div>
<div id="t85" class="t" style="left:2234.7px;top:1625.3px;font-size:26px;line-height:26px;color:#dcdcdc;font-weight:400;font-family:'Liberation Mono', monospace;">15</div>
<div class="t" style="left:2316.5px;top:1625.3px;font-size:26px;line-height:26px;font-family:'Liberation Mono', monospace;white-space:pre"><span style="color:#e4e4e4">  </span><span style="color:#e4e4e4">"</span><span style="color:#9d8bf5">id</span><span style="color:#e4e4e4">"</span><span style="color:#e4e4e4">: </span><span style="color:#e4e4e4">"</span><span style="color:#6ec592">01JCVBTMTKR41S8STTKEXSKX6C</span><span style="color:#e4e4e4">"</span><span style="color:#e4e4e4">,</span></div>
<div id="t87" class="t" style="left:2234.7px;top:1677.2px;font-size:26px;line-height:26px;color:#dcdcdc;font-weight:400;font-family:'Liberation Mono', monospace;">16</div>
<div class="t" style="left:2316.5px;top:1677.2px;font-size:26px;line-height:26px;font-family:'Liberation Mono', monospace;white-space:pre"><span style="color:#e4e4e4">  </span><span style="color:#e4e4e4">"</span><span style="color:#9d8bf5">ts</span><span style="color:#e4e4e4">"</span><span style="color:#e4e4e4">: </span><span style="color:#f29e38">1731790197587</span></div>
<div id="t89" class="t" style="left:2234.7px;top:1729.1px;font-size:26px;line-height:26px;color:#dcdcdc;font-weight:400;font-family:'Liberation Mono', monospace;">17</div>
<div class="t" style="left:2316.5px;top:1729.1px;font-size:26px;line-height:26px;font-family:'Liberation Mono', monospace;white-space:pre"><span style="color:#e4e4e4">}</span></div>
<svg style="position:absolute;left:2285px;top:1420px;" width="20" height="24" viewBox="0 0 20 24" fill="none"><path d="M4 3 L14 12 L4 21" stroke="#d0d0d0" stroke-width="2.2" fill="none"/></svg>
<div style="position:absolute;left:2588px;top:1429px;width:3px;height:3px;background:#a0a0a0"></div>
<div style="position:absolute;left:2593px;top:1429px;width:3px;height:3px;background:#a0a0a0"></div>
<div style="position:absolute;left:2598px;top:1429px;width:3px;height:3px;background:#a0a0a0"></div>
<div id="t91" class="t" style="left:633.2px;top:1574.4px;font-size:28.8px;line-height:28.8px;color:#f4f4f4;font-weight:400;font-family:'Liberation Sans', sans-serif;transform:scaleX(0.9154);transform-origin:0 0;">Run</div>
<div id="t92" class="t" style="left:634.1px;top:1627.9px;font-size:25.5px;line-height:25.5px;color:#f4f4f4;font-weight:400;font-family:'Liberation Sans', sans-serif;transform:scaleX(0.9424);transform-origin:0 0;">Completed: 11/16/2024, 3:49:58 PM</div>
<div style="position:absolute;left:1210.3px;top:1585px;width:33.8px;height:15.7px;background:#171717"></div>
<div style="position:absolute;left:1244.1px;top:1573px;width:843.6px;height:39.4px;background:#077c4c;border-radius:7px"></div>
<div style="position:absolute;left:634.3px;top:1737.3px;width:55.4px;height:55.1px;background:#0b0e16;border:2px solid #1b2233;box-sizing:border-box;border-radius:9px"></div>
<svg style="position:absolute;left:654px;top:1753px;" width="16" height="24" viewBox="0 0 16 24" fill="none"><path d="M4.5 4 L11.5 12 L4.5 20" stroke="#e0e0e0" stroke-width="2.4" fill="none"/></svg>
<div id="t93" class="t" style="left:707.6px;top:1750.6px;font-size:28.8px;line-height:28.8px;color:#f4f4f4;font-weight:400;font-family:'Liberation Sans', sans-serif;">wait-a-moment</div>
<div style="position:absolute;left:915px;top:1737.3px;width:84px;height:50.7px;border:2px solid #4a4a4a;box-sizing:border-box;border-radius:26px"></div>
<div id="t94" class="t" style="left:929.6px;top:1748.7px;font-size:25.5px;line-height:25.5px;color:#d6d6d6;font-weight:400;font-family:'Liberation Sans', sans-serif;transform:scaleX(0.9066);transform-origin:0 0;">sleep</div>
<div id="t95" class="t" style="left:705.7px;top:1803.4px;font-size:25.5px;line-height:25.5px;color:#f4f4f4;font-weight:400;font-family:'Liberation Sans', sans-serif;transform:scaleX(0.9441);transform-origin:0 0;">Completed: 11/16/2024, 3:49:58 PM</div>
<div style="position:absolute;left:1210px;top:1768.3px;width:3.8px;height:2.0px;background:#f0f0f0"></div>
<div style="position:absolute;left:1213.8px;top:1761px;width:39.0px;height:15.6px;background:#171717"></div>
<div style="position:absolute;left:1252.8px;top:1748.8px;width:812.8px;height:39.5px;background:#077c4c;border-radius:7px"></div>
<div style="position:absolute;left:2065.6px;top:1768.3px;width:22.1px;height:2.0px;background:#f0f0f0"></div>
<div style="position:absolute;left:1832.3px;top:653.6px;width:311.9px;height:122.9px;border:12px solid #ff6a00;box-sizing:border-box"></div>
<div style="position:absolute;left:112px;top:249px;width:2829.5px;height:1715px;border:1.5px solid #222;border-top:none;box-sizing:border-box;border-radius:0 0 20px 20px"></div>
</div></body></html>
